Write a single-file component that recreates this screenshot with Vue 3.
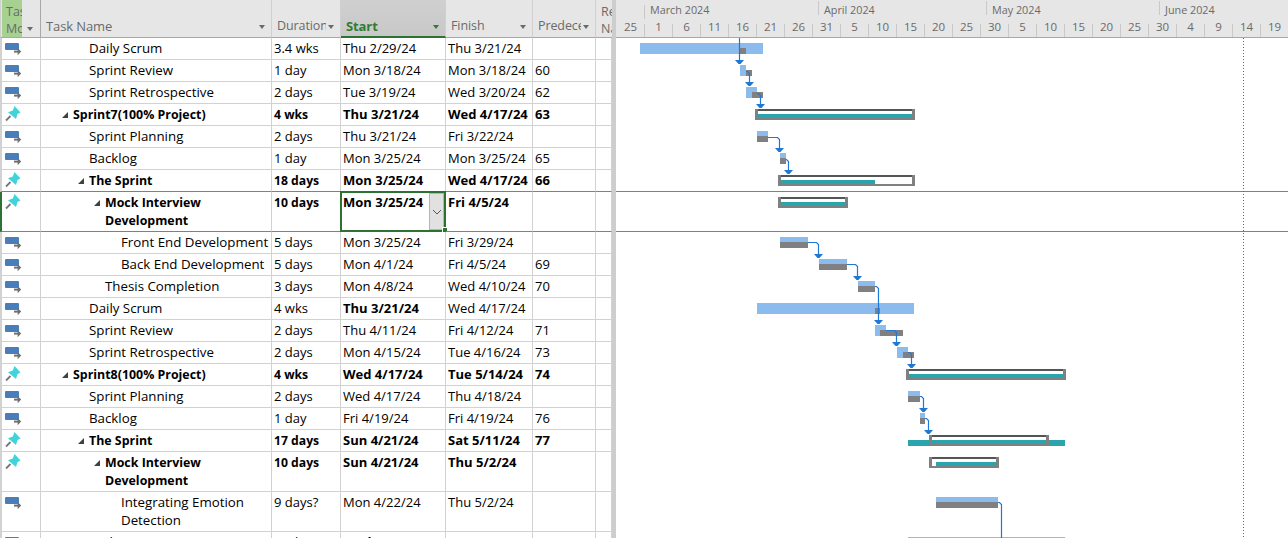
<script setup>
const rows = [
  { name: 'Daily Scrum', dur: '3.4 wks', start: 'Thu 2/29/24', finish: 'Thu 3/21/24', pred: '', lv: 1 },
  { name: 'Sprint Review', dur: '1 day', start: 'Mon 3/18/24', finish: 'Mon 3/18/24', pred: '60', lv: 1 },
  { name: 'Sprint Retrospective', dur: '2 days', start: 'Tue 3/19/24', finish: 'Wed 3/20/24', pred: '62', lv: 1 },
  { name: 'Sprint7(100% Project)', dur: '4 wks', start: 'Thu 3/21/24', finish: 'Wed 4/17/24', pred: '63', lv: 0, sum: true },
  { name: 'Sprint Planning', dur: '2 days', start: 'Thu 3/21/24', finish: 'Fri 3/22/24', pred: '', lv: 1 },
  { name: 'Backlog', dur: '1 day', start: 'Mon 3/25/24', finish: 'Mon 3/25/24', pred: '65', lv: 1 },
  { name: 'The Sprint', dur: '18 days', start: 'Mon 3/25/24', finish: 'Wed 4/17/24', pred: '66', lv: 1, sum: true, dark: true },
  { name: 'Mock Interview\nDevelopment', dur: '10 days', start: 'Mon 3/25/24', finish: 'Fri 4/5/24', pred: '', lv: 2, sum: true, tall: true, sel: true, dark: true },
  { name: 'Front End Development', dur: '5 days', start: 'Mon 3/25/24', finish: 'Fri 3/29/24', pred: '', lv: 3 },
  { name: 'Back End Development', dur: '5 days', start: 'Mon 4/1/24', finish: 'Fri 4/5/24', pred: '69', lv: 3 },
  { name: 'Thesis Completion', dur: '3 days', start: 'Mon 4/8/24', finish: 'Wed 4/10/24', pred: '70', lv: 2 },
  { name: 'Daily Scrum', dur: '4 wks', start: 'Thu 3/21/24', finish: 'Wed 4/17/24', pred: '', lv: 1, boldStart: true },
  { name: 'Sprint Review', dur: '2 days', start: 'Thu 4/11/24', finish: 'Fri 4/12/24', pred: '71', lv: 1 },
  { name: 'Sprint Retrospective', dur: '2 days', start: 'Mon 4/15/24', finish: 'Tue 4/16/24', pred: '73', lv: 1 },
  { name: 'Sprint8(100% Project)', dur: '4 wks', start: 'Wed 4/17/24', finish: 'Tue 5/14/24', pred: '74', lv: 0, sum: true },
  { name: 'Sprint Planning', dur: '2 days', start: 'Wed 4/17/24', finish: 'Thu 4/18/24', pred: '', lv: 1 },
  { name: 'Backlog', dur: '1 day', start: 'Fri 4/19/24', finish: 'Fri 4/19/24', pred: '76', lv: 1 },
  { name: 'The Sprint', dur: '17 days', start: 'Sun 4/21/24', finish: 'Sat 5/11/24', pred: '77', lv: 1, sum: true },
  { name: 'Mock Interview\nDevelopment', dur: '10 days', start: 'Sun 4/21/24', finish: 'Thu 5/2/24', pred: '', lv: 2, sum: true, tall: true },
  { name: 'Integrating Emotion\nDetection', dur: '9 days?', start: 'Mon 4/22/24', finish: 'Thu 5/2/24', pred: '', lv: 3, tall: true },
  { name: 'Daily Scrum', dur: '4 wks', start: 'Wed 4/17/24', finish: 'Tue 5/14/24', pred: '', lv: 1, boldStart: true },
]

const heads = [
  { label: 'Task Name', cls: 'h-name' },
  { label: 'Duration' },
  { label: 'Start', cls: 'h-start' },
  { label: 'Finish' },
  { label: 'Predecessors' },
]

const months = [
  { label: 'March 2024', w: 174, cls: 'm-first' },
  { label: 'April 2024', w: 168 },
  { label: 'May 2024', w: 173 },
  { label: 'June 2024', w: 128 },
]
const days = [25, 1, 6, 11, 16, 21, 26, 31, 5, 10, 15, 20, 25, 30, 5, 10, 15, 20, 25, 30, 4, 9, 14, 19]

// [x1, x2, y1, y2] in screenshot coordinates
const blueBars = [
  [640, 763, 43, 54], [740, 746, 65, 76], [746, 757, 87, 98],
  [757, 768, 131, 136], [780, 786, 153, 158],
  [780, 808, 237, 242], [819, 847, 259, 264], [858, 875, 281, 286],
  [757, 914, 303, 314], [875, 886, 325, 336], [897, 908, 347, 358],
  [908, 920, 391, 396], [920, 925, 413, 418], [936, 998, 497, 502],
  [908, 1065, 537, 538],
]
const greyBars = [
  [739, 746, 48, 54], [746, 752, 70, 76], [752, 763, 92, 98],
  [757, 768, 136, 142], [780, 786, 158, 164],
  [780, 808, 242, 248], [819, 847, 264, 270], [858, 875, 286, 292],
  [875, 880, 308, 314], [880, 903, 330, 336], [903, 914, 352, 358],
  [908, 920, 396, 402], [920, 925, 418, 424], [936, 998, 502, 508],
]
const tealBars = [[908, 1065, 440, 446]]
// frame x1, x2, top, progress x1, x2
const frames = [
  [755, 915, 109, 758, 912],
  [778, 915, 175, 781, 875],
  [778, 848, 197, 781, 845],
  [906, 1066, 369, 909, 1063],
  [929, 1049, 435, 932, 1046],
  [929, 999, 457, 936, 996],
]
// start x, start y, elbow x, head y (null start x = comes from above the view)
const links = [
  [null, 38, 739.5, 60], [746, 71.5, 749.5, 82], [757, 93.5, 760.5, 104],
  [768, 137.5, 779.5, 148], [786, 159.5, 788.5, 170],
  [808, 242.5, 818.5, 254], [847, 264.5, 857.5, 276], [875, 286.5, 878.5, 320],
  [886, 330.5, 896.5, 342], [908, 352.5, 911.5, 364],
  [920, 396.5, 923.5, 408], [925, 418.5, 928.5, 430],
]
const linkPath = ([x1, y1, xc, yh]) =>
  x1 === null ? `M${xc} ${y1}V${yh + 2}` : `M${x1} ${y1}H${xc - 2}L${xc} ${y1 + 2}V${yh + 2}`
const headPoints = ([, , xc, yh]) => `${xc - 4.5},${yh} ${xc + 4.5},${yh} ${xc + 1},${yh + 4} ${xc - 1},${yh + 4}`
</script>

<template>
  <div class="app">
    <section class="table">
      <div class="row head">
        <div class="cell mode-head">
          <span class="mode-label">Task<br />Mode</span>
          <i class="drop"></i>
        </div>
        <div v-for="h in heads" :key="h.label" class="cell hcell" :class="h.cls">
          <span class="hlabel">{{ h.label }}</span>
          <i class="drop"></i>
        </div>
        <div class="cell hcell h-res"><span class="res-label">Resource<br />Names</span></div>
      </div>

      <div
        v-for="(r, i) in rows"
        :key="i"
        class="row"
        :class="{ tall: r.tall, dark: r.dark, sel: r.sel, sum: r.sum }"
      >
        <div class="cell c-mode">
          <svg v-if="r.sum" class="icon" width="17" height="16" viewBox="0 0 17 16">
            <path d="M5.5 10 1 14.5" stroke="#777" stroke-width="1.8" fill="none" />
            <path d="M9.5 0 15.5 6.5 12.5 8 11 13 3 6.2 7.8 4.6Z" fill="#3ed4da" />
          </svg>
          <svg v-else class="icon" width="18" height="16" viewBox="0 0 18 16">
            <rect x="0" y="3" width="14" height="7" rx="1" fill="#4a7ebb" />
            <rect x="9" y="10.6" width="4.5" height="2" fill="#6f6f6f" />
            <path d="M12.6 8 16.2 11.6 12.6 15.2Z" fill="#6f6f6f" />
          </svg>
        </div>
        <div class="cell c-name" :class="'lv' + r.lv">
          <svg v-if="r.sum" class="tri" width="6" height="6" viewBox="0 0 6 6">
            <path d="M6 0V6H0Z" fill="#404040" />
          </svg>
          <span class="nm">{{ r.name }}</span>
        </div>
        <div class="cell c-dur">{{ r.dur }}</div>
        <div class="cell c-start" :class="{ strong: r.boldStart }">
          {{ r.start }}
          <template v-if="r.sel">
            <span class="sel-frame"></span>
            <span class="sel-btn">
              <svg width="10" height="6" viewBox="0 0 10 6">
                <path d="M1 1 5 5 9 1" stroke="#555" fill="none" />
              </svg>
            </span>
            <span class="sel-handle"></span>
          </template>
        </div>
        <div class="cell">{{ r.finish }}</div>
        <div class="cell">{{ r.pred }}</div>
        <div class="cell"></div>
      </div>
    </section>

    <div class="divider"></div>

    <section class="chart">
      <header class="scale">
        <div class="months">
          <div v-for="m in months" :key="m.label" class="month" :class="m.cls" :style="{ width: m.w + 'px' }">
            {{ m.label }}
          </div>
        </div>
        <div class="days">
          <div v-for="(d, i) in days" :key="i" class="day">{{ d }}</div>
        </div>
      </header>
      <svg class="gantt" width="672" height="500" viewBox="616 38 672 500">
        <line x1="616" y1="191.5" x2="1288" y2="191.5" class="sep" />
        <line x1="616" y1="231.5" x2="1288" y2="231.5" class="sep" />
        <line x1="1243.5" y1="38" x2="1243.5" y2="538" class="today" />
        <rect v-for="(b, i) in blueBars" :key="'b' + i" :x="b[0]" :y="b[2]" :width="b[1] - b[0]" :height="b[3] - b[2]" class="blue" />
        <rect v-for="(b, i) in greyBars" :key="'g' + i" :x="b[0]" :y="b[2]" :width="b[1] - b[0]" :height="b[3] - b[2]" class="grey" />
        <rect v-for="(b, i) in tealBars" :key="'t' + i" :x="b[0]" :y="b[2]" :width="b[1] - b[0]" :height="b[3] - b[2]" class="teal" />
        <g v-for="(f, i) in frames" :key="'f' + i">
          <rect :x="f[0]" :y="f[2]" :width="f[1] - f[0]" height="11" class="grey" />
          <rect :x="f[0] + 3" :y="f[2]" :width="f[1] - f[0] - 6" height="2" class="fdark" />
          <rect :x="f[0] + 3" :y="f[2] + 2" :width="f[1] - f[0] - 6" height="7" class="white" />
          <rect :x="f[3]" :y="f[2] + 5" :width="f[4] - f[3]" height="4" class="teal" />
        </g>
        <path class="link" d="M998 502.5H999.5L1001.5 504.5V538" />
        <g v-for="(l, i) in links" :key="'l' + i">
          <path class="link" :d="linkPath(l)" />
          <polygon class="arrow" :points="headPoints(l)" />
        </g>
      </svg>
    </section>
  </div>
</template>

<style scoped>
.app {
  display: flex;
  width: 1288px;
  height: 538px;
  overflow: hidden;
  background: #fff;
  font-family: "Open Sans", "Noto Sans", sans-serif;
  font-size: 13px;
  color: #000;
}
.table {
  width: 612px;
  flex: none;
}
.row {
  display: grid;
  grid-template-columns: 41px 231px 69px 105px 87px 63px 16px;
  height: 22px;
}
.row.tall {
  height: 40px;
}
.cell {
  box-sizing: border-box;
  border-right: 1px solid #d2d2d2;
  border-bottom: 1px solid #d2d2d2;
  padding: 1px 0 0 2px;
  line-height: 18px;
  white-space: nowrap;
  position: relative;
}
.row.dark .cell {
  border-bottom-color: #808080;
}
.row.sum .cell {
  font-weight: 700;
}
.row .cell.strong {
  font-weight: 700;
}
.c-mode {
  border-left: 2px solid #d2d2d2;
  padding: 0;
}
.row.sel .c-mode {
  border-left-color: #2e7233;
}
.icon {
  display: block;
  margin: 2px 0 0 3px;
}
.c-name {
  display: flex;
  align-items: flex-start;
  font-size: 13.3px;
}
.row.sum .c-name {
  font-size: 12.4px;
  padding-top: 2px;
}
.row.sum .c-dur {
  font-size: 12.2px;
  padding-top: 2px;
}
.nm {
  white-space: pre-line;
}
.lv0 { padding-left: 32px; }
.lv1 { padding-left: 48px; }
.lv2 { padding-left: 64px; }
.lv3 { padding-left: 80px; }
.tri {
  flex: none;
  position: absolute;
  margin: 6px 0 0 -11px;
}

.head {
  height: 38px;
  background: #e6e6e6;
  color: #6a6a6a;
}
.head .cell {
  height: 38px;
  padding: 0;
  border-bottom: 1px solid #a8a8a8;
  border-right-color: #d0d0d0;
}
.mode-head {
  display: flex;
  border-left: 1px solid #cfcfcf;
  border-right: 1px solid #a8a8a8 !important;
  padding-left: 1px !important;
}
.mode-label {
  display: block;
  width: 20px;
  height: 100%;
  background: #a6d190;
  overflow: hidden;
  font-size: 12.5px;
  line-height: 17px;
  padding-top: 3px;
  box-sizing: border-box;
  padding-left: 4px;
}
.mode-head .drop {
  margin-left: 5px;
}
.hcell {
  display: flex;
  align-items: flex-end;
  padding: 0 6px 2px 5px !important;
  font-size: 12.5px;
}
.hlabel {
  flex: 1;
  min-width: 0;
  overflow: hidden;
  letter-spacing: -0.1px;
}
.h-name {
  font-size: 13px;
}
.drop {
  flex: none;
  width: 0;
  height: 0;
  margin: 0 0 6px 2px;
  border-left: 3.5px solid transparent;
  border-right: 3.5px solid transparent;
  border-top: 4px solid #6a6a6a;
  align-self: flex-end;
}
.h-start {
  background: linear-gradient(#d0d0d0, #c8c8c8);
  color: #2e7d32;
  font-weight: 700;
  font-size: 13px;
  border-bottom: 2px solid #2e7233 !important;
  padding-bottom: 1px !important;
}
.h-start .drop {
  border-top-color: #2e7d32;
}
.h-res {
  padding: 0 0 0 5px !important;
  overflow: hidden;
  border-right: none !important;
  align-items: flex-start;
}
.res-label {
  line-height: 17px;
  padding-top: 3px;
}

.sel-frame {
  position: absolute;
  left: -1px;
  top: -1px;
  right: -1px;
  bottom: -1px;
  border: 2px solid #2e7233;
  pointer-events: none;
}
.sel-btn {
  position: absolute;
  left: 88px;
  top: 1px;
  width: 15px;
  height: 37px;
  box-sizing: border-box;
  background: #e1e1e1;
  border: 1px solid #b4b4b4;
  display: flex;
  align-items: center;
  justify-content: center;
}
.sel-handle {
  position: absolute;
  right: -3px;
  bottom: -2px;
  background: #2e7233;
  border: 1px solid #fff;
  width: 4px;
  height: 4px;
}

.divider {
  width: 4px;
  flex: none;
  background: #cdcdcd;
}
.chart {
  flex: 1;
  min-width: 0;
  overflow: hidden;
}
.scale {
  height: 38px;
  box-sizing: border-box;
  background: #e6e6e6;
  border-bottom: 1px solid #a8a8a8;
  color: #6a6a6a;
  font-size: 11.5px;
  overflow: hidden;
}
.months {
  display: flex;
  height: 24px;
  padding-left: 28px;
  font-size: 10.8px;
}
.month {
  flex: none;
  box-sizing: border-box;
  height: 14px;
  margin-top: 1px;
  padding-left: 5px;
  border-left: 1px solid #c8c8c8;
  line-height: 18px;
  white-space: nowrap;
}
.month.m-first {
  margin-top: 5px;
  line-height: 10px;
}
.days {
  display: grid;
  grid-template-columns: repeat(24, 28px);
  padding-left: 1px;
  height: 13px;
}
.day {
  box-sizing: border-box;
  border-right: 1px solid #c8c8c8;
  text-align: center;
  line-height: 6px;
}
.gantt {
  display: block;
}
.blue { fill: #8cbbee; }
.grey { fill: #808080; }
.teal { fill: #2aa5ae; }
.white { fill: #fff; }
.fdark { fill: #555; }
.sep { stroke: #808080; stroke-width: 1; }
.today { stroke: #666; stroke-width: 1; stroke-dasharray: 1 2; }
.link { fill: none; stroke: #1f78d6; stroke-width: 1.2; }
.arrow { fill: #1f78d6; }
</style>
